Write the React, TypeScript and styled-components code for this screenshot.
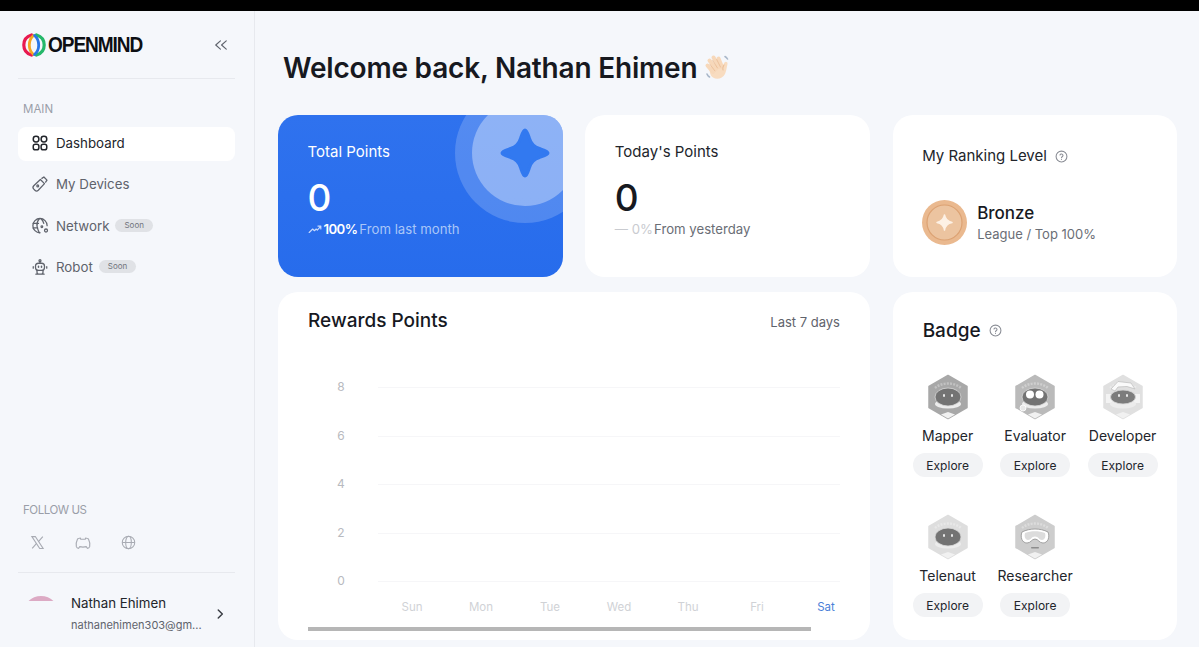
import React from 'react'
import styled, { createGlobalStyle } from 'styled-components'

const GlobalStyle = createGlobalStyle`
  html, body {
    margin: 0;
    padding: 0;
    height: 100%;
    overflow: hidden;
    background: #000;
    font-family: Inter, "Liberation Sans", sans-serif;
  }
  * { box-sizing: border-box; }
`

const Page = styled.div`
  height: 647px;
  padding-top: 11px;
  background: #000;
`

const Shell = styled.div`
  display: flex;
  height: 636px;
  background: #f5f7fb;
  overflow: hidden;
`

const Sidebar = styled.aside`
  width: 255px;
  flex: none;
  display: flex;
  flex-direction: column;
  border-right: 1px solid #e7e9ee;
  padding: 0 19px 0 18px;
`

const LogoRow = styled.div`
  height: 68px;
  flex: none;
  display: flex;
  align-items: center;
  justify-content: space-between;
  padding: 0 7px 0 4px;
  border-bottom: 1px solid #e7e9ee;
`

const Logo = styled.div`
  display: flex;
  align-items: center;
  gap: 2px;
`

const LogoText = styled.span`
  display: inline-block;
  width: 96px;
  font-family: "Liberation Sans", sans-serif;
  font-weight: 700;
  font-size: 22px;
  letter-spacing: -1.2px;
  color: #0d0f14;
  transform: scaleX(0.865);
  transform-origin: left center;
  white-space: nowrap;
`

const SectionLabel = styled.div<{ $top: number; $tight?: boolean }>`
  margin-top: ${({ $top }) => $top}px;
  padding-left: 5px;
  font-size: 11.5px;
  line-height: 16px;
  letter-spacing: ${({ $tight }) => ($tight ? '-0.45px' : '0')};
  color: #9a9ea8;
`

const NavList = styled.nav`
  margin-top: 10px;
  display: flex;
  flex-direction: column;
  gap: 7.25px;
`

const NavItem = styled.div<{ $active?: boolean }>`
  height: 34px;
  display: flex;
  align-items: center;
  gap: 7px;
  padding: 0 0 2px 13px;
  border-radius: 8px;
  font-size: 13.3px;
  color: ${({ $active }) => ($active ? '#22252b' : '#5f636c')};
  background: ${({ $active }) => ($active ? '#fff' : 'transparent')};
`

const Soon = styled.span`
  height: 13px;
  padding: 0 9px;
  margin-left: -1px;
  border-radius: 7px;
  background: #e0e2e6;
  color: #70747c;
  font-size: 8px;
  line-height: 13px;
`

const Spacer = styled.div`
  flex: 1;
`

const Socials = styled.div`
  display: flex;
  gap: 30px;
  padding: 17px 0 21px 12px;
  border-bottom: 1px solid #e7e9ee;
  color: #a8abb3;
`

const Profile = styled.div`
  height: 74px;
  flex: none;
  display: flex;
  padding: 20px 8px 0 5px;
  overflow: hidden;
`

const Avatar = styled.div`
  width: 36px;
  height: 36px;
  margin: 3px 12px 0 0;
  flex: none;
  border-radius: 50%;
  background: linear-gradient(#dcaac4 0 5px, #f5f7fb 5px);
`

const ProfileText = styled.div`
  flex: 1;
`

const ProfileName = styled.div`
  font-size: 13.3px;
  line-height: 20px;
  color: #22252b;
`

const ProfileMail = styled.div`
  margin-top: 3px;
  font-size: 11px;
  line-height: 18px;
  color: #5f636c;
`

const ProfileArrow = styled.div`
  display: flex;
  padding-top: 14px;
  color: #3a3d44;
`

const Main = styled.main`
  flex: 1;
  padding: 0 21px 0 23px;
`

const Title = styled.h1`
  margin: 0;
  height: 104px;
  padding: 38px 0 0 5px;
  display: flex;
  align-items: flex-start;
  gap: 6px;
  font-size: 28px;
  line-height: 38px;
  font-weight: 600;
  color: #17191f;
  letter-spacing: -0.2px;
`

const WaveSvg = styled.svg`
  flex: none;
  margin-top: 4px;
`

const Grid = styled.div`
  display: grid;
  grid-template-columns: repeat(3, 284.67px);
  grid-template-rows: 162px 348px;
  column-gap: 22.67px;
  row-gap: 15px;
`

const Card = styled.section`
  position: relative;
  background: #fff;
  border-radius: 20px;
  overflow: hidden;
  padding: 27px 30px 26px 29.5px;
`

const BlueCard = styled(Card)`
  background: linear-gradient(180deg, #2f72ee 0%, #276cec 100%);
  color: #fff;
`

const WideCard = styled(Card)`
  grid-column: span 2;
  padding: 16px 30px 0;
  display: flex;
  flex-direction: column;
`

const Halo = styled.div<{ $size: number; $alpha: number }>`
  position: absolute;
  left: ${({ $size }) => 247 - $size / 2}px;
  top: ${({ $size }) => 37.5 - $size / 2}px;
  width: ${({ $size }) => $size}px;
  height: ${({ $size }) => $size}px;
  border-radius: 50%;
  background: rgba(255, 255, 255, ${({ $alpha }) => $alpha});
`

const Sparkle = styled.svg`
  position: absolute;
  left: 222px;
  top: 13px;
`

const CardLabel = styled.div<{ $dark?: boolean }>`
  font-size: 15px;
  line-height: 20px;
  font-weight: 400;
  color: ${({ $dark }) => ($dark ? '#22252b' : 'inherit')};
`

const StatValue = styled.div<{ $dark?: boolean }>`
  position: relative;
  margin-top: 14px;
  font-size: 37px;
  line-height: 44px;
  font-weight: 500;
  color: ${({ $dark }) => ($dark ? '#17191f' : 'inherit')};
`

const StatNote = styled.div<{ $gap: number }>`
  position: relative;
  display: flex;
  align-items: center;
  gap: ${({ $gap }) => $gap}px;
  margin-top: -1px;
  font-size: 13.2px;
  line-height: 20px;
`

const Strong = styled.b`
  font-weight: 600;
  letter-spacing: -0.6px;
`

const NoteMuted = styled.span<{ $tone: string }>`
  color: ${({ $tone }) => $tone};
`

const RankHead = styled.div`
  display: flex;
  align-items: center;
  gap: 8px;
  color: #22252b;
  padding-top: 4px;
`

const RankBody = styled.div`
  display: flex;
  align-items: center;
  gap: 10px;
  margin-top: 34px;
`

const RankName = styled.div`
  font-size: 17px;
  line-height: 22px;
  font-weight: 500;
  color: #17191f;
`

const RankSub = styled.div`
  font-size: 13px;
  line-height: 20px;
  color: #6a6e76;
`

const ChartHead = styled.div`
  display: flex;
  align-items: center;
  justify-content: space-between;
  height: 24px;
  flex: none;
`

const ChartTitle = styled.h2`
  margin: 0;
  font-size: 19px;
  font-weight: 500;
  color: #17191f;
`

const Range = styled.span`
  font-size: 13px;
  color: #5f636c;
  padding-top: 4px;
`

const ChartSvg = styled.svg`
  display: block;
  flex: none;
  margin-top: 41px;
  font-family: Inter, sans-serif;
`

const Scroll = styled.div`
  flex: none;
  margin-top: 6px;
  width: 503px;
  height: 4px;
  background: #b6b6b6;
`

const BadgeHead = styled.div`
  display: flex;
  align-items: center;
  gap: 8px;
  height: 24px;
  padding-left: 10px;
`

const BadgeTitle = styled.h2`
  margin: 0;
  font-size: 19px;
  font-weight: 500;
  color: #17191f;
`

const BadgeCard = styled(Card)`
  padding: 26px 20px 0 20px;
`

const BadgeGrid = styled.div`
  display: grid;
  grid-template-columns: repeat(3, 70px);
  column-gap: 17.5px;
  row-gap: 37px;
  margin-top: 32px;
`

const BadgeItem = styled.div`
  display: flex;
  flex-direction: column;
  align-items: center;
`

const BadgeName = styled.div`
  margin-top: 6px;
  font-size: 14px;
  line-height: 20px;
  white-space: nowrap;
  color: #22252b;
`

const Explore = styled.button`
  width: 70px;
  height: 24px;
  margin-top: 7px;
  padding: 0;
  border: 0;
  border-radius: 12px;
  background: #f2f3f5;
  color: #22252b;
  font: 400 12px Inter, sans-serif;
`

const Help = ({ size = 13 }: { size?: number }) => (
  <svg width={size} height={size} viewBox="0 0 24 24" fill="none" stroke="#8b8e96" strokeWidth="2" strokeLinecap="round">
    <circle cx="12" cy="12" r="10" />
    <path d="M9.2 9.3a2.9 2.9 0 0 1 5.6 1c0 1.9-2.8 2.4-2.8 3.9" />
    <path d="M12 17.4h.01" />
  </svg>
)

const LogoMark = () => (
  <svg width="24" height="24" viewBox="0 0 24 24" fill="none" strokeLinecap="round">
    <path d="M9.500 2C4.500 3.500 1.800 7.500 1.800 12s2.700 8.500 7.700 10" stroke="#e8194f" strokeWidth="3.200" />
    <path d="M14.500 2c5 1.500 7.700 5.500 7.700 10s-2.700 8.500-7.700 10" stroke="#25b86a" strokeWidth="3.200" />
    <path d="M11.500 2.500C8.500 5 7.300 8.500 7.300 12s1.200 7 4.200 9.500" stroke="#f5a623" strokeWidth="2.800" />
    <path d="M12.500 2.500c3 2.500 4.200 6 4.200 9.500s-1.200 7-4.200 9.500" stroke="#2a76e8" strokeWidth="2.800" />
  </svg>
)

const iconProps = {
  width: 18,
  height: 18,
  viewBox: '0 0 24 24',
  fill: 'none',
  stroke: 'currentColor',
  strokeWidth: 1.7,
  strokeLinecap: 'round' as const,
  strokeLinejoin: 'round' as const,
}

const DashboardIcon = () => (
  <svg {...iconProps} strokeWidth={2}>
    <rect x="3" y="3" width="7.500" height="7.500" rx="3.500" />
    <rect x="13.500" y="3" width="7.500" height="7.500" rx="3.500" />
    <rect x="3" y="13.500" width="7.500" height="7.500" rx="2.800" />
    <rect x="13.500" y="13.500" width="7.500" height="7.500" rx="2.800" />
  </svg>
)

const DeviceIcon = () => (
  <svg {...iconProps}>
    <path d="M3.700 14.300 12.500 6l5.500 5.500-8.300 8.800a3.200 3.200 0 0 1-4.500 0l-1.500-1.500a3.200 3.200 0 0 1 0-4.500Z" />
    <path d="m14.500 4.500 2.700-1.800 4.100 4.100-1.800 2.700" />
    <circle cx="9" cy="14.500" r="1.200" />
  </svg>
)

const NetworkIcon = () => (
  <svg {...iconProps}>
    <path d="M12 21a9.500 9.500 0 1 1 9.500-9.500" />
    <path d="M11 2.500C8 6 7.500 9 8 12c.4 3 1.600 6 3 9" />
    <path d="M3 8.500h7M2.800 14.500h6" />
    <path d="M14 3c1.500 1.500 2.500 3.500 3 5.500" />
    <circle cx="14.500" cy="13" r="1.100" />
    <circle cx="20" cy="18" r="2" />
  </svg>
)

const RobotIcon = () => (
  <svg {...iconProps}>
    <circle cx="12" cy="3.500" r="1.300" />
    <path d="M12 5v2" />
    <rect x="6" y="7" width="12" height="9.500" rx="4" />
    <path d="M3 11.500v2M21 11.500v2" />
    <path d="M10 11v1.200M14 11v1.200" strokeWidth="2" />
    <path d="M6.500 21.500h11M8 16.500v2.500a2.500 2.500 0 0 0 2.500 2.500h3a2.500 2.500 0 0 0 2.500-2.500v-2.500" />
  </svg>
)

const XIcon = () => (
  <svg width="15" height="15" viewBox="0 0 24 24" fill="none" stroke="currentColor" strokeWidth="1.800">
    <path d="M3 2.500h5.500L21 21.500h-5.500Z" />
    <path d="M20.500 2.500 13.500 10.500M10.500 13.500 3.500 21.500" />
  </svg>
)

const DiscordIcon = () => (
  <svg width="16" height="16" viewBox="0 0 24 24" fill="none" stroke="currentColor" strokeWidth="1.700" strokeLinejoin="round" strokeLinecap="round">
    <path d="M8 4.500C6 4.700 4.800 5.200 3.800 6 2 9.500 1.500 13.500 2 17.500c.5 1.500 2 2.500 3.500 2.500L7 17.500c3.300.8 6.700.8 10 0l1.500 2.500c1.500 0 3-1 3.500-2.500.5-4 0-8-1.800-11.500-1-.8-2.200-1.300-4.200-1.500l-.6 1.800H8.600Z" />
  </svg>
)

const GlobeIcon = () => (
  <svg width="15" height="15" viewBox="0 0 24 24" fill="none" stroke="currentColor" strokeWidth="1.700">
    <circle cx="12" cy="12" r="10" />
    <ellipse cx="12" cy="12" rx="4.500" ry="10" />
    <path d="M2 12h20" />
  </svg>
)

const Wave = () => (
  <WaveSvg width="30" height="30" viewBox="0 0 30 30">
    <path d="M7 15c1-3 10-5 13-3l1.500-2.500c1-1.500 3.500-.5 3 1.500-.8 3-1 7-2.500 10-2.200 4.500-8 6-12 3.500C7.500 23 6 18.500 7 15Z" fill="#f8dcc0" />
    <g fill="none" stroke="#f7d8ba" strokeWidth="4" strokeLinecap="round">
      <path d="M10 19 4.500 12.500" />
      <path d="M13 16 6.500 7.500" />
      <path d="M16 14 10.500 4.500" />
      <path d="M19 14 15.500 5.500" />
    </g>
    <path d="M7 11.500 12 18M9.700 7.500 14.500 15M13.700 6.500 17.500 14" fill="none" stroke="#e6b68e" strokeWidth=".7" strokeLinecap="round" />
    <path d="M21 12c-1 1.500-1.500 3-1 5" fill="none" stroke="#e8bc95" strokeWidth="1" strokeLinecap="round" />
    <path d="M22 3.500c1 .5 2 1.500 2.500 2.500M4 21c.5 1.200 1.300 2.200 2.500 3" fill="none" stroke="#a9b7c9" strokeWidth="1.600" strokeLinecap="round" />
  </WaveSvg>
)

const Medal = () => (
  <svg width="45" height="45" viewBox="0 0 45 45">
    <circle cx="22.500" cy="22.500" r="22.500" fill="#eab98f" />
    <circle cx="22.500" cy="22.500" r="17.500" fill="#ecc4a0" stroke="#dca273" strokeWidth="1.200" />
    <path d="M22.500 15c.8 4.500 3 6.700 7.500 7.500-4.500.8-6.700 3-7.500 7.500-.8-4.500-3-6.700-7.500-7.500 4.500-.8 6.700-3 7.500-7.500Z" fill="#fdf1e5" stroke="#fdf1e5" strokeWidth="1.500" strokeLinejoin="round" />
  </svg>
)

type BadgeKind = 'mapper' | 'evaluator' | 'developer' | 'telenaut' | 'researcher'

const hexFill: Record<BadgeKind, string> = {
  mapper: '#a8a8a8',
  evaluator: '#bababa',
  developer: '#e0e0e0',
  telenaut: '#dedede',
  researcher: '#cdcdcd',
}

const BadgeArt = ({ kind }: { kind: BadgeKind }) => (
  <svg width="44" height="46" viewBox="0 0 44 46">
    <path d="M22 1.500 41 12.500v21L22 44.500 3 33.500v-21Z" fill={hexFill[kind]} stroke={hexFill[kind]} strokeWidth="1.500" strokeLinejoin="round" />
    <path d="M9 14c7-6 19-6 26 0" fill="none" stroke="#fff" strokeOpacity=".3" strokeWidth="2.500" strokeDasharray="2 1.200" />
    <path d="M15 40.500 22 44.500l7-4-7-2.500Z" fill="#f1f1f1" />
    {kind === 'researcher' ? (
      <>
        <path d="M9 18c8-4 18-4 26 0 2 5 0 11-5 11-4 0-4.500-4-8-4s-4 4-8 4c-5 0-7-6-5-11Z" fill="#fff" stroke="#8f8f8f" strokeWidth=".8" />
        <path d="M12 19c6-2.500 14-2.500 20 0 1 3 0 7-3 7-3 0-3.500-3.500-7-3.500S18 26 15 26c-3 0-4-4-3-7Z" fill="#dcdcdc" />
        <rect x="18" y="33" width="8" height="1.500" rx=".7" fill="#8c8c8c" />
      </>
    ) : (
      <>
        {kind === 'developer' && (
          <>
            <path d="M10 15 17 7.500l13 1.500 4 6-8-2.500-9 .5-3 4Z" fill="#fafafa" stroke="#c2c2c2" strokeWidth=".8" />
            <path d="M5 20h6v9H5ZM33 20h6v9h-6Z" fill="#f3f3f3" />
          </>
        )}
        <ellipse cx="22" cy="30" rx="13" ry="4.500" fill="#ececec" />
        <ellipse cx="22" cy="23" rx={kind === 'developer' ? 12.500 : 13} ry={kind === 'developer' ? 7 : 9} fill={kind === 'developer' ? '#7c7c7c' : '#737373'} stroke="#d8d8d8" strokeWidth=".8" />
        {kind === 'evaluator' ? (
          <>
            <circle cx="17" cy="20.500" r="4" fill="#fff" />
            <circle cx="26.500" cy="20.500" r="4" fill="#fff" />
            <circle cx="10" cy="34" r="3" fill="#e8e8e8" stroke="#fff" strokeWidth=".8" />
          </>
        ) : (
          <>
            <rect x="17" y="20" width="2" height="3" rx="1" fill="#e8e8e8" />
            <rect x="25" y="20" width="2" height="3" rx="1" fill="#e8e8e8" />
          </>
        )}
      </>
    )}
  </svg>
)

const badges: { name: string; kind: BadgeKind }[] = [
  { name: 'Mapper', kind: 'mapper' },
  { name: 'Evaluator', kind: 'evaluator' },
  { name: 'Developer', kind: 'developer' },
  { name: 'Telenaut', kind: 'telenaut' },
  { name: 'Researcher', kind: 'researcher' },
]

const ticks = [
  { label: '8', y: 14 },
  { label: '6', y: 63 },
  { label: '4', y: 111 },
  { label: '2', y: 160 },
  { label: '0', y: 208 },
]

const days = [
  { label: 'Sun', x: 104 },
  { label: 'Mon', x: 173 },
  { label: 'Tue', x: 242 },
  { label: 'Wed', x: 311 },
  { label: 'Thu', x: 380 },
  { label: 'Fri', x: 449 },
  { label: 'Sat', x: 518 },
]

const Chart = () => (
  <ChartSvg width="532" height="248" viewBox="0 0 532 248">
    {ticks.map((t) => (
      <g key={t.label}>
        <text x="33" y={t.y + 4} fontSize="12" textAnchor="middle" fill="#b8bac0">{t.label}</text>
        <line x1="70" x2="532" y1={t.y + 0.5} y2={t.y + 0.5} stroke="#f6f6f8" />
      </g>
    ))}
    {days.map((d) => (
      <text
        key={d.label}
        x={d.x}
        y="238"
        fontSize="11.500"
        textAnchor="middle"
        fill={d.label === 'Sat' ? '#4a7fd8' : '#d0d2d6'}
      >
        {d.label}
      </text>
    ))}
  </ChartSvg>
)

export default function App() {
  return (
    <Page>
      <GlobalStyle />
      <Shell>
        <Sidebar>
          <LogoRow>
            <Logo>
              <LogoMark />
              <LogoText>OPENMIND</LogoText>
            </Logo>
            <svg width="14" height="14" viewBox="0 0 24 24" fill="none" stroke="#5f636c" strokeWidth="2" strokeLinecap="round" strokeLinejoin="round">
              <path d="m11 5-8 7 8 7M21 5l-8 7 8 7" />
            </svg>
          </LogoRow>
          <SectionLabel $top={22}>MAIN</SectionLabel>
          <NavList>
            <NavItem $active><DashboardIcon />Dashboard</NavItem>
            <NavItem><DeviceIcon />My Devices</NavItem>
            <NavItem><NetworkIcon />Network<Soon>Soon</Soon></NavItem>
            <NavItem><RobotIcon />Robot<Soon>Soon</Soon></NavItem>
          </NavList>
          <Spacer />
          <SectionLabel $top={0} $tight>FOLLOW US</SectionLabel>
          <Socials>
            <XIcon />
            <DiscordIcon />
            <GlobeIcon />
          </Socials>
          <Profile>
            <Avatar />
            <ProfileText>
              <ProfileName>Nathan Ehimen</ProfileName>
              <ProfileMail>nathanehimen303@gm...</ProfileMail>
            </ProfileText>
            <ProfileArrow>
              <svg width="14" height="14" viewBox="0 0 24 24" fill="none" stroke="currentColor" strokeWidth="2.500" strokeLinecap="round" strokeLinejoin="round">
                <path d="m9 5 7 7-7 7" />
              </svg>
            </ProfileArrow>
          </Profile>
        </Sidebar>
        <Main>
          <Title>Welcome back, Nathan Ehimen <Wave /></Title>
          <Grid>
            <BlueCard>
              <Halo $size={140} $alpha={0.18} />
              <Halo $size={106} $alpha={0.34} />
              <Sparkle width="50" height="50" viewBox="0 0 50 50">
                <path d="M25 2c2 0 3 4 4.500 8.500 1.500 5 5 8.500 10 10 4.500 1.500 8.500 2.500 8.500 4.500s-4 3-8.500 4.500c-5 1.500-8.500 5-10 10C28 44 27 48 25 48s-3-4-4.500-8.500c-1.500-5-5-8.500-10-10C6 28 2 27 2 25s4-3 8.500-4.500c5-1.500 8.500-5 10-10C22 6 23 2 25 2Z" fill="#3279f0" stroke="#3279f0" strokeWidth="3" strokeLinejoin="round" />
              </Sparkle>
              <CardLabel>Total Points</CardLabel>
              <StatValue>0</StatValue>
              <StatNote $gap={2}>
                <svg width="14" height="14" viewBox="0 0 24 24" fill="none" stroke="#c7d9fb" strokeWidth="2" strokeLinecap="round" strokeLinejoin="round">
                  <path d="m2 18 6-6 3 3 3-3 2 2 6-7M17 7h5v5" />
                </svg>
                <Strong>100%</Strong>
                <NoteMuted $tone="#a9c6f8">From last month</NoteMuted>
              </StatNote>
            </BlueCard>
            <Card>
              <CardLabel $dark>Today's Points</CardLabel>
              <StatValue $dark>0</StatValue>
              <StatNote $gap={1}>
                <NoteMuted $tone="#c9cbd0">— 0%</NoteMuted>
                <NoteMuted $tone="#6a6e76">From yesterday</NoteMuted>
              </StatNote>
            </Card>
            <Card>
              <RankHead>
                <CardLabel>My Ranking Level</CardLabel>
                <Help />
              </RankHead>
              <RankBody>
                <Medal />
                <div>
                  <RankName>Bronze</RankName>
                  <RankSub>League / Top 100%</RankSub>
                </div>
              </RankBody>
            </Card>
            <WideCard>
              <ChartHead>
                <ChartTitle>Rewards Points</ChartTitle>
                <Range>Last 7 days</Range>
              </ChartHead>
              <Chart />
              <Scroll />
            </WideCard>
            <BadgeCard>
              <BadgeHead>
                <BadgeTitle>Badge</BadgeTitle>
                <Help />
              </BadgeHead>
              <BadgeGrid>
                {badges.map((b) => (
                  <BadgeItem key={b.name}>
                    <BadgeArt kind={b.kind} />
                    <BadgeName>{b.name}</BadgeName>
                    <Explore>Explore</Explore>
                  </BadgeItem>
                ))}
              </BadgeGrid>
            </BadgeCard>
          </Grid>
        </Main>
      </Shell>
    </Page>
  )
}
